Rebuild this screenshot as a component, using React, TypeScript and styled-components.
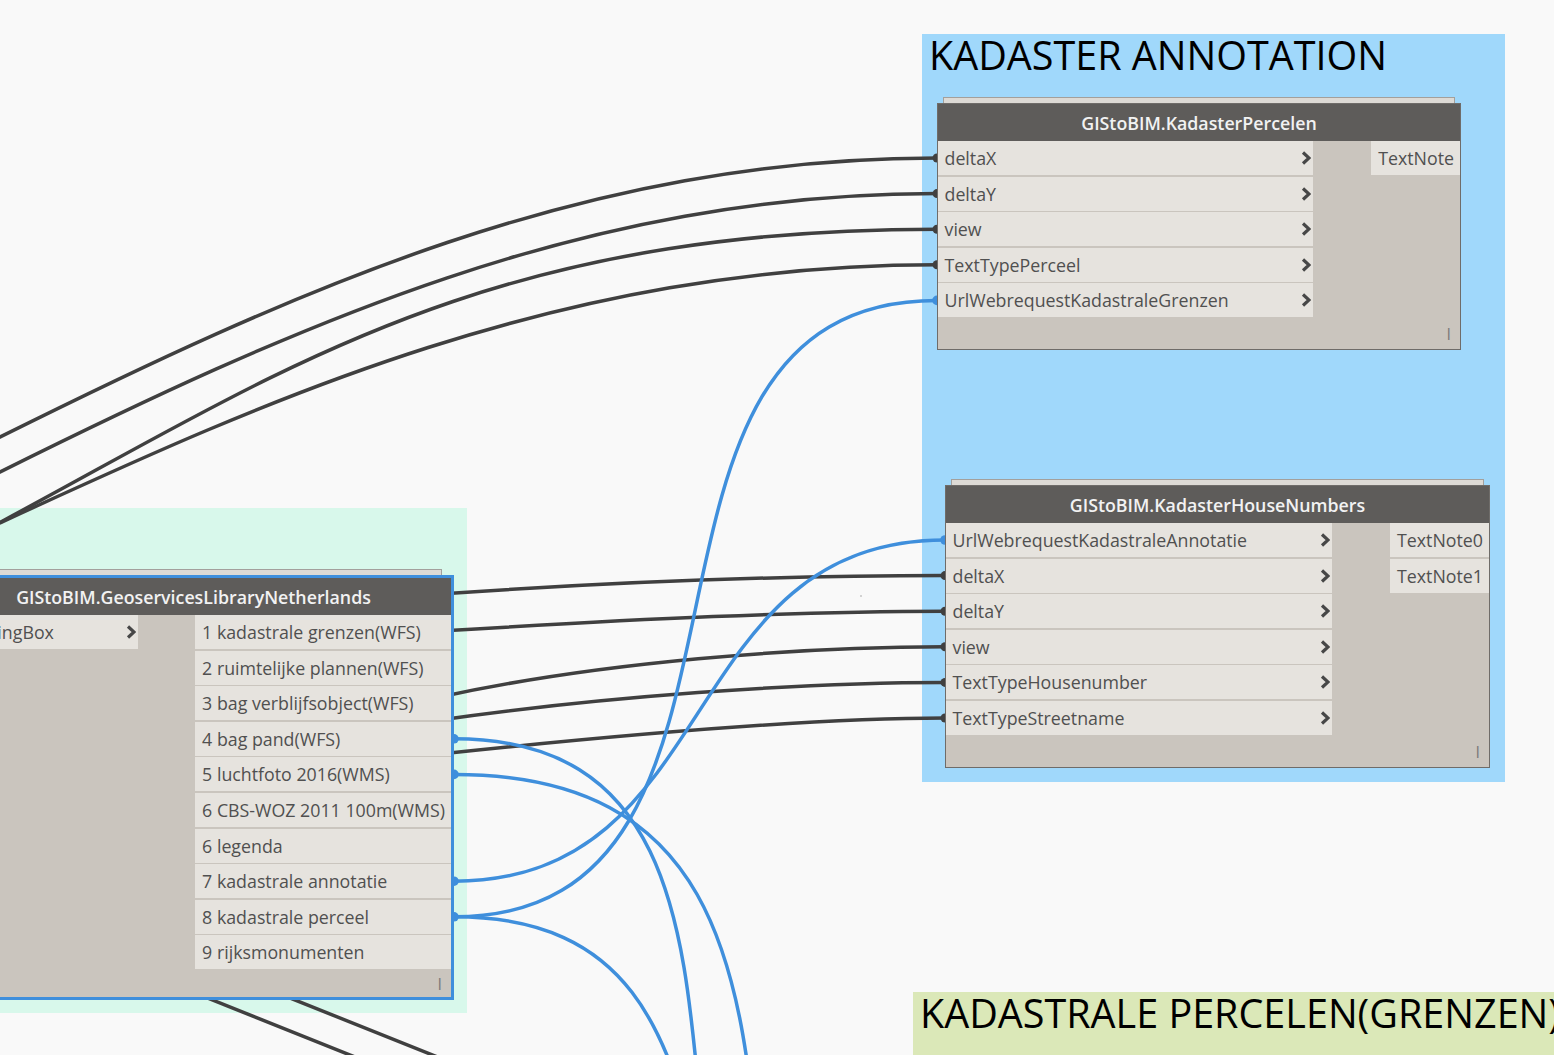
import React from 'react';
import styled, { createGlobalStyle } from 'styled-components';

const PITCH = 35.6;
const ROW_H = 34;
const HEADER_H = 37;

const DARK = '#404040';
const BLUE = '#3f8fdc';

const GlobalStyle = createGlobalStyle`
  html, body { margin: 0; padding: 0; width: 100%; height: 100%; overflow: hidden; background: #f9f9f9; }
  body { font-family: "Open Sans", "Noto Sans", sans-serif; }
  #root { width: 100%; height: 100%; }
`;

const Canvas = styled.div`
  position: relative;
  width: 1554px;
  height: 1055px;
  overflow: hidden;
  background: #f9f9f9;
`;

const Group = styled.div<{ $x: number; $y: number; $w: number; $h: number; $bg: string }>`
  position: absolute;
  left: ${(p) => p.$x}px;
  top: ${(p) => p.$y}px;
  width: ${(p) => p.$w}px;
  height: ${(p) => p.$h}px;
  background: ${(p) => p.$bg};
  box-sizing: border-box;
  padding: 2px 0 0 7px;
  z-index: 0;
`;

const GroupTitle = styled.div`
  font-family: "Open Sans", "Noto Sans", sans-serif;
  font-size: 39.5px;
  line-height: 39.5px;
  color: #000;
  white-space: nowrap;
`;

const WireLayer = styled.svg`
  position: absolute;
  left: 0;
  top: 0;
  width: 1554px;
  height: 1055px;
  z-index: 1;
  overflow: visible;
  pointer-events: none;
`;

const NodeBox = styled.div<{ $x: number; $y: number; $w: number; $selected?: boolean }>`
  position: absolute;
  left: ${(p) => p.$x}px;
  top: ${(p) => p.$y}px;
  width: ${(p) => p.$w}px;
  box-sizing: border-box;
  z-index: 2;
  display: flex;
  flex-direction: column;
  background: #cac5be;
  border: ${(p) => (p.$selected ? `3px solid ${BLUE}` : '1px solid #6f6c69')};
  font-family: "Open Sans", "Noto Sans", sans-serif;
`;

const Stack = styled.div<{ $selected?: boolean }>`
  position: absolute;
  left: 5px;
  right: ${(p) => (p.$selected ? 9 : 5)}px;
  top: ${(p) => (p.$selected ? -9 : -7)}px;
  height: 6px;
  box-sizing: border-box;
  background: #dddad5;
  border: 1px solid #a3a09c;
  border-bottom: none;
`;

const Header = styled.div`
  height: ${HEADER_H}px;
  flex: none;
  background: #5e5c5a;
  color: #f2f2f2;
  font-size: 17.8px;
  font-weight: 600;
  display: flex;
  align-items: center;
  justify-content: center;
  white-space: nowrap;
`;

const Body = styled.div`
  display: flex;
  justify-content: space-between;
  align-items: flex-start;
`;

const PortColumn = styled.div<{ $w?: number }>`
  display: flex;
  flex-direction: column;
  width: ${(p) => (p.$w ? `${p.$w}px` : 'auto')};
  flex: none;
`;

const PortRow = styled.div<{ $kind: 'in' | 'out' }>`
  height: ${ROW_H}px;
  margin-bottom: ${PITCH - ROW_H}px;
  background: #e6e3de;
  display: flex;
  align-items: center;
  justify-content: space-between;
  box-sizing: border-box;
  padding: ${(p) => (p.$kind === 'in' ? '0 2px 0 6.5px' : '0 6px 0 7.5px')};
  color: #505050;
  font-size: 17.8px;
  white-space: nowrap;
`;

const ChevronSvg = styled.svg`
  flex: none;
  display: block;
`;

const Footer = styled.div<{ $h: number }>`
  height: ${(p) => p.$h}px;
  display: flex;
  justify-content: flex-end;
  align-items: center;
  padding-right: 9px;
  color: #7a7a7a;
  font-size: 16px;
  line-height: 16px;
`;

const Chevron = () => (
  <ChevronSvg viewBox="0 0 10 14" width="10" height="14">
    <polyline points="2,1.5 8,7 2,12.5" fill="none" stroke="#474747" strokeWidth="3.2" />
  </ChevronSvg>
);

type NodeProps = {
  x: number;
  y: number;
  w: number;
  title: string;
  inputs: string[];
  inputWidth: number;
  outputs: string[];
  footer: number;
  selected?: boolean;
};

const Node = ({ x, y, w, title, inputs, inputWidth, outputs, footer, selected }: NodeProps) => (
  <NodeBox $x={x} $y={y} $w={w} $selected={selected}>
    <Stack $selected={selected} />
    <Header>{title}</Header>
    <Body>
      <PortColumn $w={inputWidth}>
        {inputs.map((n) => (
          <PortRow key={n} $kind="in">
            <span>{n}</span>
            <Chevron />
          </PortRow>
        ))}
      </PortColumn>
      <PortColumn>
        {outputs.map((n) => (
          <PortRow key={n} $kind="out">
            <span>{n}</span>
          </PortRow>
        ))}
      </PortColumn>
    </Body>
    <Footer $h={footer}>I</Footer>
  </NodeBox>
);

// geometry
const N1 = { x: 937, y: 103 };
const N2 = { x: 945, y: 485 };
const N3 = { x: -67, y: 575 };
const n1Port = (i: number) => N1.y + 1 + HEADER_H + ROW_H / 2 + PITCH * i;
const n2Port = (i: number) => N2.y + 1 + HEADER_H + ROW_H / 2 + PITCH * i;
const n3Port = (i: number) => N3.y + 3 + HEADER_H + ROW_H / 2 + PITCH * i;
const N3_OUT_X = 454;

const bez = (x1: number, y1: number, x2: number, y2: number, d: number) =>
  `M ${x1} ${y1} C ${x1 + d} ${y1}, ${x2 - d} ${y2}, ${x2} ${y2}`;

const darkWires = [
  `M -20 447 C 300 287, 587 ${n1Port(0)}, ${N1.x} ${n1Port(0)}`,
  `M -20 482 C 300 322, 587 ${n1Port(1)}, ${N1.x} ${n1Port(1)}`,
  `M -20 533 C 270 380, 470 ${n1Port(2)}, ${N1.x} ${n1Port(2)}`,
  `M -20 532 C 250 408, 550 ${n1Port(3)}, ${N1.x} ${n1Port(3)}`,
  `M 440 594 C 640 580, 800 ${n2Port(1)}, ${N2.x} ${n2Port(1)}`,
  `M 440 631 C 640 619, 800 ${n2Port(2)}, ${N2.x} ${n2Port(2)}`,
  `M 440 697 C 600 662, 800 ${n2Port(3)}, ${N2.x} ${n2Port(3)}`,
  `M 440 720 C 600 697, 800 ${n2Port(4)}, ${N2.x} ${n2Port(4)}`,
  `M 440 754 C 600 737, 800 ${n2Port(5)}, ${N2.x} ${n2Port(5)}`,
  `M 105 957 L 485 1109`,
  `M 185 956 L 565 1108`,
];

const blueWires = [
  bez(N3_OUT_X, n3Port(8), N1.x, n1Port(4), 354),
  bez(N3_OUT_X, n3Port(7), N2.x, n2Port(0), 270),
  bez(N3_OUT_X, n3Port(3), 945, 1459, 424),
  bez(N3_OUT_X, n3Port(4), 1065, 1543, 525),
  bez(N3_OUT_X, n3Port(8), 945, 1400, 360),
];

const darkMarkers = [
  [N1.x, n1Port(0)],
  [N1.x, n1Port(1)],
  [N1.x, n1Port(2)],
  [N1.x, n1Port(3)],
  [N2.x, n2Port(1)],
  [N2.x, n2Port(2)],
  [N2.x, n2Port(3)],
  [N2.x, n2Port(4)],
  [N2.x, n2Port(5)],
];

const blueMarkers = [
  [N1.x, n1Port(4)],
  [N2.x, n2Port(0)],
  [N3_OUT_X, n3Port(3)],
  [N3_OUT_X, n3Port(4)],
  [N3_OUT_X, n3Port(7)],
  [N3_OUT_X, n3Port(8)],
];

export default function App() {
  return (
    <>
      <GlobalStyle />
      <Canvas>
        <Group $x={922} $y={34} $w={583} $h={748} $bg="#a0d8fb">
          <GroupTitle>KADASTER ANNOTATION</GroupTitle>
        </Group>
        <Group $x={-10} $y={508} $w={477} $h={505} $bg="#d8f8eb" />
        <Group $x={913} $y={992} $w={700} $h={100} $bg="#dbe8b8">
          <GroupTitle>KADASTRALE PERCELEN(GRENZEN)</GroupTitle>
        </Group>

        <WireLayer viewBox="0 0 1554 1055">
          {darkWires.map((d, i) => (
            <path key={`d${i}`} d={d} fill="none" stroke={DARK} strokeWidth={3.5} />
          ))}
          {blueWires.map((d, i) => (
            <path key={`b${i}`} d={d} fill="none" stroke={BLUE} strokeWidth={3.5} />
          ))}
          {darkMarkers.map(([x, y], i) => (
            <circle key={`dm${i}`} cx={x} cy={y} r={4.5} fill={DARK} />
          ))}
          {blueMarkers.map(([x, y], i) => (
            <circle key={`bm${i}`} cx={x} cy={y} r={4.8} fill={BLUE} />
          ))}
          <circle cx={861} cy={596} r={1} fill="#c4c4c4" />
        </WireLayer>

        <Node
          x={N1.x}
          y={N1.y}
          w={524}
          title="GIStoBIM.KadasterPercelen"
          inputs={['deltaX', 'deltaY', 'view', 'TextTypePerceel', 'UrlWebrequestKadastraleGrenzen']}
          inputWidth={375}
          outputs={['TextNote']}
          footer={30}
        />
        <Node
          x={N2.x}
          y={N2.y}
          w={545}
          title="GIStoBIM.KadasterHouseNumbers"
          inputs={[
            'UrlWebrequestKadastraleAnnotatie',
            'deltaX',
            'deltaY',
            'view',
            'TextTypeHousenumber',
            'TextTypeStreetname',
          ]}
          inputWidth={386}
          outputs={['TextNote0', 'TextNote1']}
          footer={30}
        />
        <Node
          x={N3.x}
          y={N3.y}
          w={521}
          selected
          title="GIStoBIM.GeoservicesLibraryNetherlands"
          inputs={['BoundingBox']}
          inputWidth={202}
          outputs={[
            '1 kadastrale grenzen(WFS)',
            '2 ruimtelijke plannen(WFS)',
            '3 bag verblijfsobject(WFS)',
            '4 bag pand(WFS)',
            '5 luchtfoto 2016(WMS)',
            '6 CBS-WOZ 2011 100m(WMS)',
            '6 legenda',
            '7 kadastrale annotatie',
            '8 kadastrale perceel',
            '9 rijksmonumenten',
          ]}
          footer={26}
        />
      </Canvas>
    </>
  );
}
